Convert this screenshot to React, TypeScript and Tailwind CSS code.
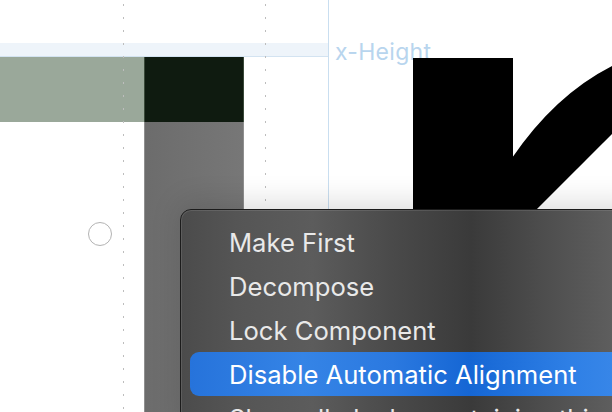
import React from "react";

const items = [
  "Make First",
  "Decompose",
  "Lock Component",
  "Disable Automatic Alignment",
  "Show all glyphs containing this component",
];

export default function App() {
  return (
    <div
      className="relative w-[612px] h-[412px] overflow-hidden bg-white"
      style={{ fontFamily: "Inter, 'Noto Sans', sans-serif" }}
    >
      {/* metric band */}
      <div className="absolute left-0 top-[43px] w-[328px] h-[14px] bg-[#eef4fa] border-b border-[#d3e3f1]" />
      {/* vertical guide */}
      <div className="absolute left-[328px] top-0 w-px h-[212px] bg-[#c9def0]" />
      <div className="absolute left-[335px] top-[37px] text-[23px] leading-[30px] text-[#b8d5ee] tracking-[0.3px]">
        x-Height
      </div>

      {/* component glyph */}
      <div className="absolute left-0 top-[57px] w-[144px] h-[65px] bg-[#9aa89a]" />
      <div className="absolute left-[144px] top-[57px] w-[100px] h-[65px] bg-[#0f1b10] border-x border-[#3a4a3a]" />
      <div className="absolute left-[144px] top-[122px] w-[100px] h-[290px] bg-[linear-gradient(90deg,#6c6c6c,#777777)] border-x border-[#8f8f8f]" />

      {/* dotted lines */}
      <div className="absolute left-[123px] top-[4px] w-px h-[408px] bg-[repeating-linear-gradient(180deg,#bdbdbd_0px,#bdbdbd_2px,transparent_2px,transparent_13px)]" />
      <div className="absolute left-[265px] top-[4px] w-px h-[206px] bg-[repeating-linear-gradient(180deg,#bdbdbd_0px,#bdbdbd_2px,transparent_2px,transparent_13px)]" />

      {/* node circle */}
      <div className="absolute left-[88px] top-[222px] w-[24px] h-[24px] rounded-full border border-[#b3b3b3] bg-white" />

      {/* black glyph h */}
      <svg className="absolute left-0 top-0" width="612" height="412" viewBox="0 0 612 412">
        <rect x="413" y="58" width="100" height="354" fill="#000" />
        <path d="M512,158 Q555,95 612,66 L612,134 Q583,163 535,211 L520,240 L512,240 Z" fill="#000" />
      </svg>

      {/* context menu */}
      <div className="absolute left-[180px] top-[209px] w-[470px] h-[230px] rounded-[11px] border border-[#1c1c1c] shadow-[0_-6px_30px_rgba(0,0,0,0.14)] bg-[linear-gradient(90deg,#4b4b4b_0%,#555555_12%,#5c5c5c_28%,#4a4a4a_45%,#3a3a3a_62%,#4e4e4e_78%,#5e5e5e_92%,#626262_100%)]">
        <div className="rounded-[10px] ring-1 ring-inset ring-white/10 h-full flex flex-col pt-[10px] px-[9px]">
          {items.map((t, i) => (
            <div
              key={t}
              className={
                i === 3
                  ? "h-[44px] shrink-0 flex items-center pl-[39px] pt-[3px] rounded-[9px] whitespace-nowrap text-[25.6px] text-white bg-[linear-gradient(90deg,#2673db_0%,#3584e6_25%,#2b79e0_45%,#1566d4_62%,#2f80e6_85%,#3d8ae9_100%)]"
                  : "h-[44px] shrink-0 flex items-center pl-[39px] pt-[3px] whitespace-nowrap text-[25.6px] text-[#e9e9e9]"
              }
            >
              {t}
            </div>
          ))}
        </div>
      </div>
    </div>
  );
}
